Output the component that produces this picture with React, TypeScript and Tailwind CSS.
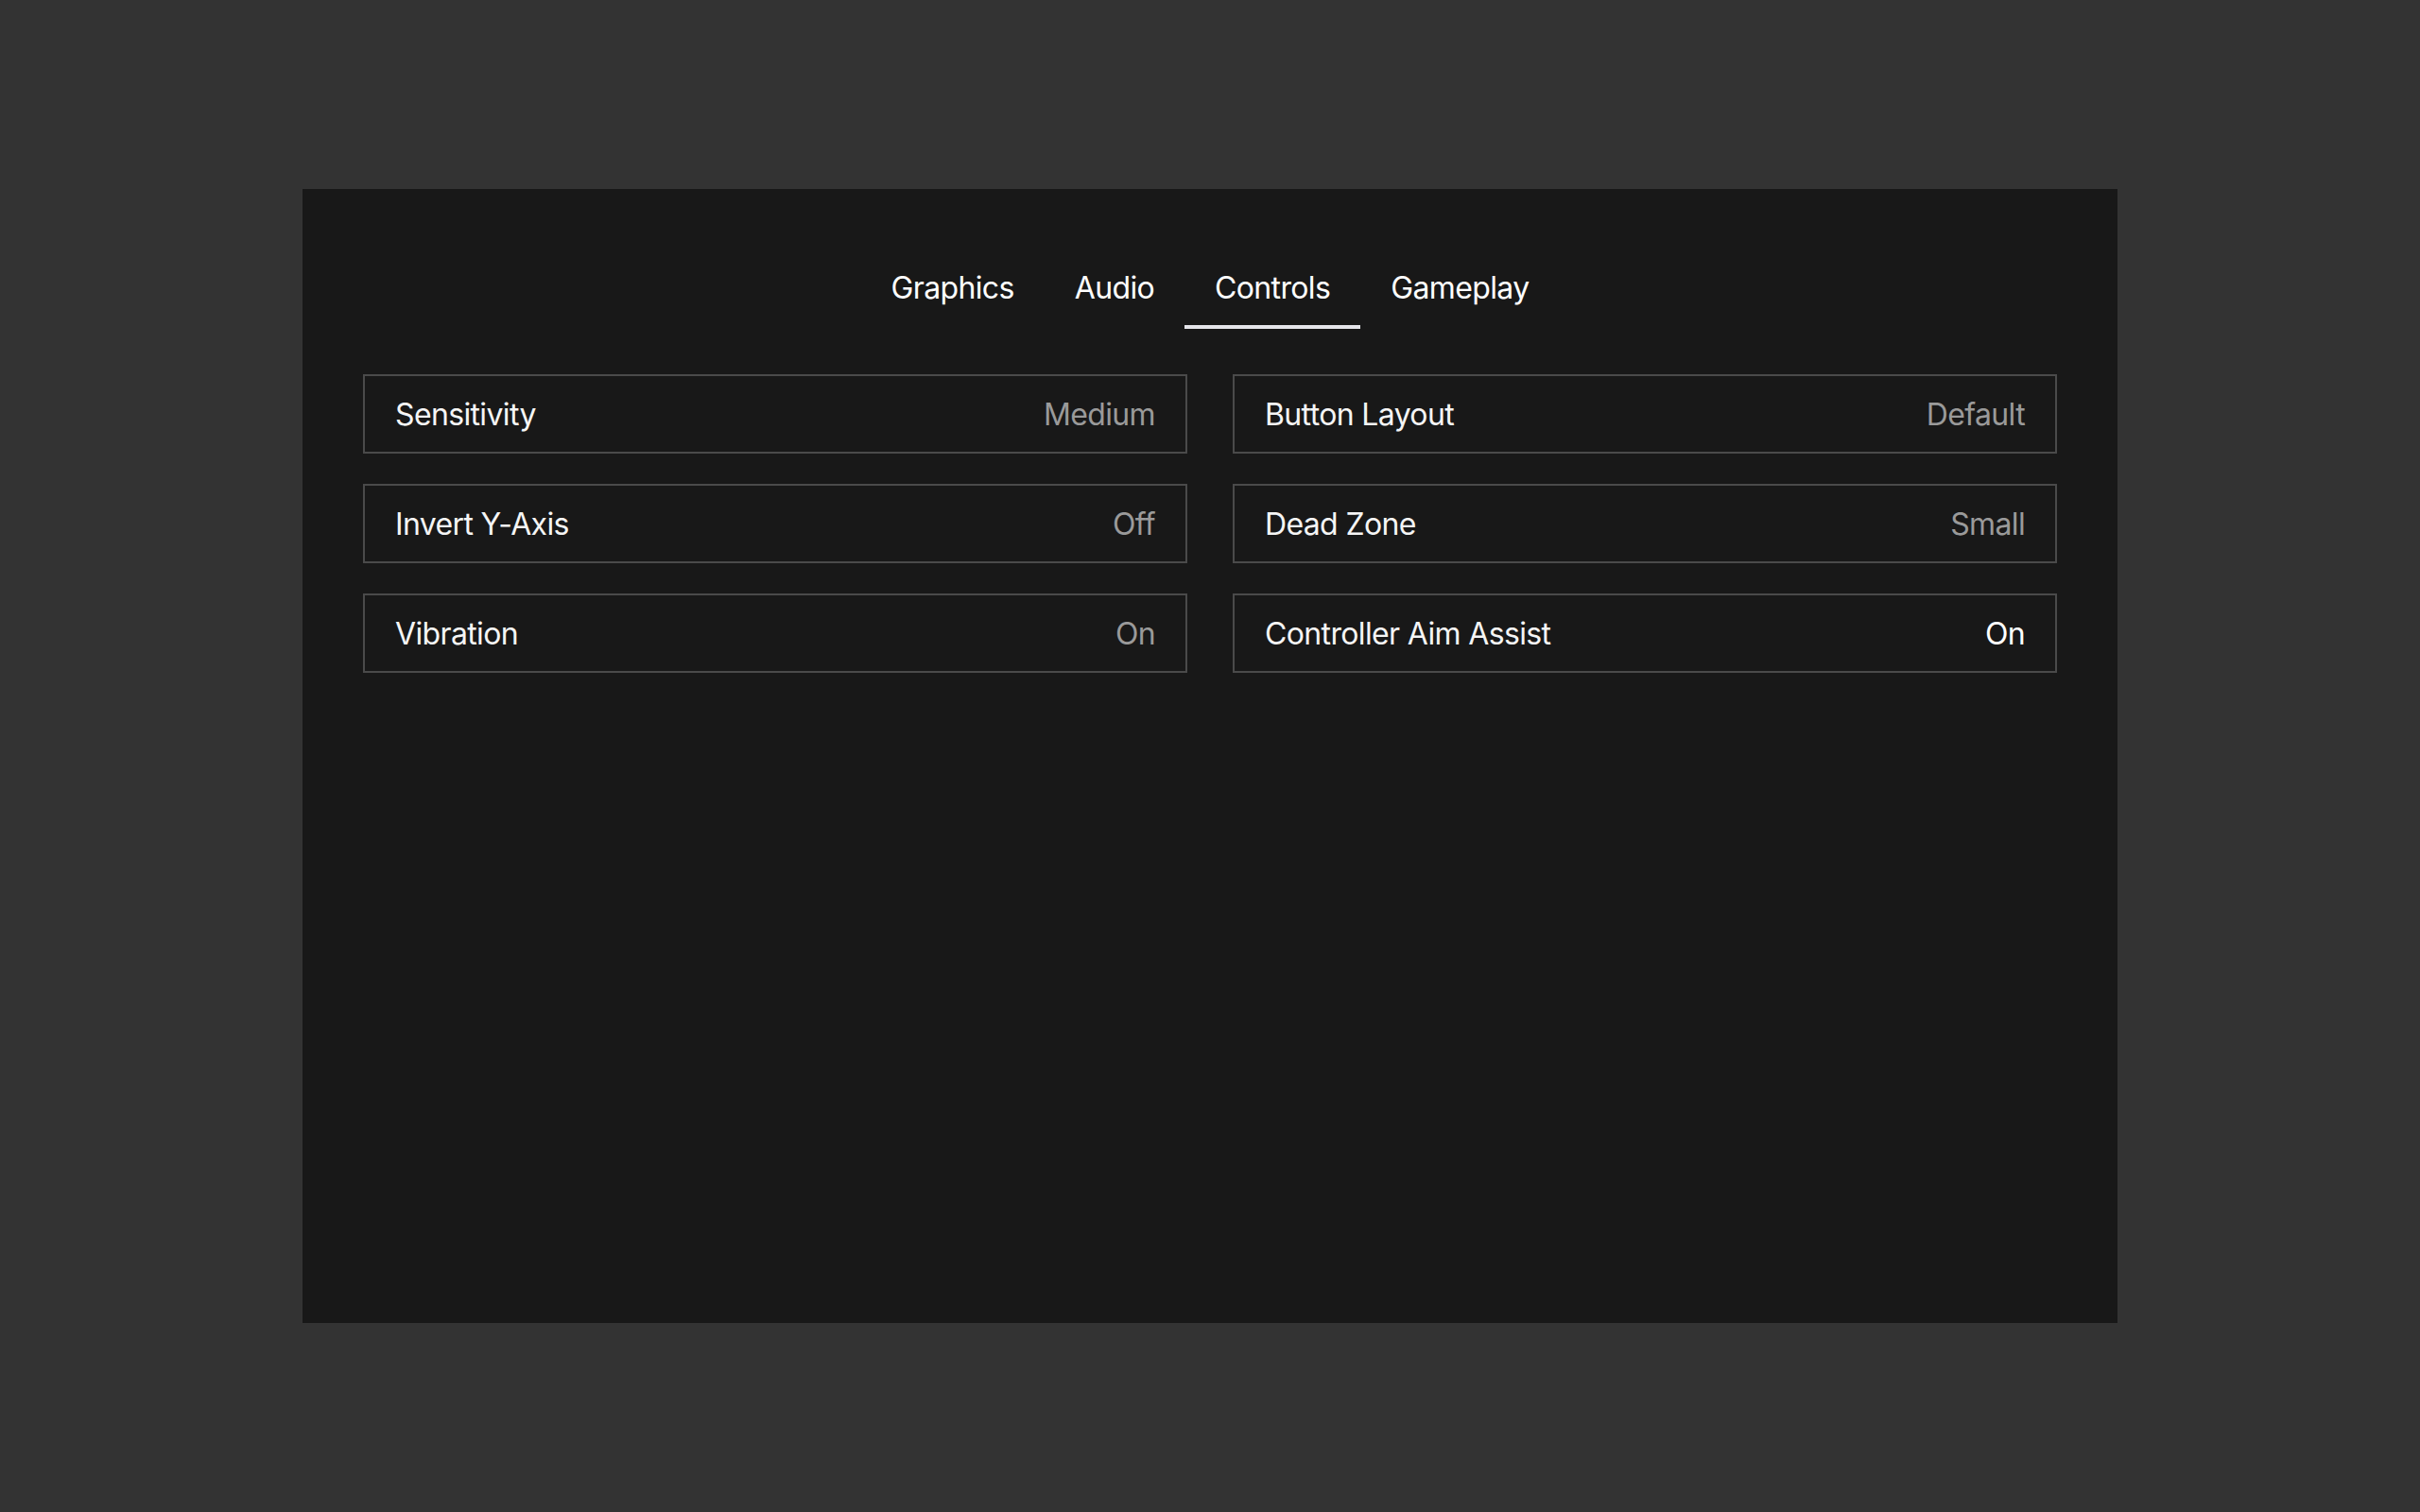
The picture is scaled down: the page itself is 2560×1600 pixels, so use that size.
import { useState } from "react";

type Setting = { label: string; value: string; active?: boolean };

const tabs = ["Graphics", "Audio", "Controls", "Gameplay"];

const left: Setting[] = [
  { label: "Sensitivity", value: "Medium" },
  { label: "Invert Y-Axis", value: "Off" },
  { label: "Vibration", value: "On" },
];

const right: Setting[] = [
  { label: "Button Layout", value: "Default" },
  { label: "Dead Zone", value: "Small" },
  { label: "Controller Aim Assist", value: "On", active: true },
];

function SettingRow({ setting }: { setting: Setting }) {
  return (
    <div className="flex items-center justify-between border-2 border-[#4a4a4a] px-8 pt-[17px] pb-[15px]">
      <span className="text-[#f5f5f5]">{setting.label}</span>
      <span className={setting.active ? "text-white" : "text-[#9a9a9a]"}>{setting.value}</span>
    </div>
  );
}

export default function App() {
  const [tab, setTab] = useState("Controls");

  return (
    <div
      className="flex min-h-screen items-center justify-center bg-[#333333]"
      style={{ fontFamily: "Inter, 'Noto Sans', sans-serif" }}
    >
      <div className="h-[1200px] w-[1920px] bg-[#181818] px-16 pt-16 text-[32px] leading-[48px] tracking-[-0.02em]">
        <nav className="flex justify-center">
          {tabs.map((t) => (
            <button
              key={t}
              onClick={() => setTab(t)}
              className={
                t === tab
                  ? "border-b-4 border-[#e5e5ea] px-8 pt-[17px] pb-[15px] text-white"
                  : "border-b-4 border-transparent px-8 pt-[17px] pb-[15px] text-white"
              }
            >
              {t}
            </button>
          ))}
        </nav>

        <div className="mt-12 grid grid-cols-2 gap-x-12">
          <div className="flex flex-col gap-8">
            {left.map((s) => (
              <SettingRow key={s.label} setting={s} />
            ))}
          </div>
          <div className="flex flex-col gap-8">
            {right.map((s) => (
              <SettingRow key={s.label} setting={s} />
            ))}
          </div>
        </div>
      </div>
    </div>
  );
}
